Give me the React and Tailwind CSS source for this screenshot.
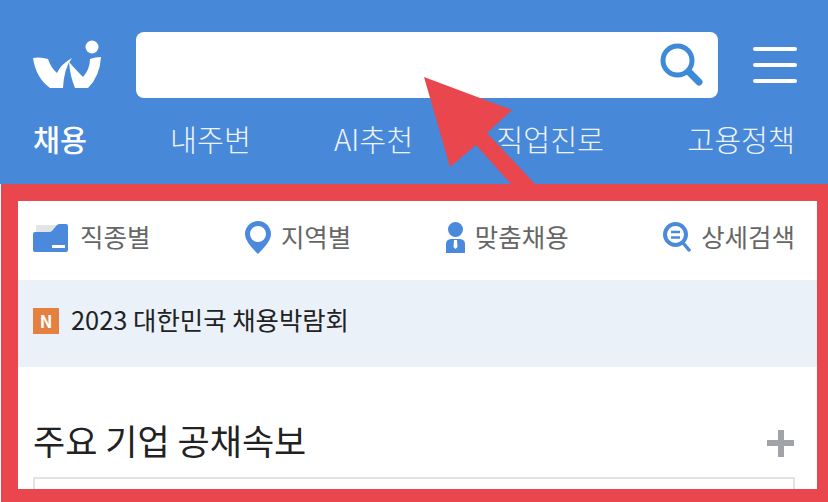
const NAV = ['내주변', 'AI추천', '직업진로', '고용정책']

function Logo() {
  return (
    <svg width="70" height="50" viewBox="0 0 70 50" className="shrink-0 text-white" fill="currentColor">
      <circle cx="59" cy="7" r="6.5" />
      <path d="M0 18 Q7 16.5 15 19 Q18 28 24 33 Q28 24 39 18 Q31 28 30 48 L17 48 Q3 38 0 18Z" />
      <path d="M36 22 Q37 36 42 48 L55 48 Q67 36 68 17 Q62 17 57 19 Q57 29 50 37 Q44 31 36 22Z" />
    </svg>
  )
}

function SearchIcon() {
  return (
    <svg width="44" height="44" viewBox="0 0 44 44" fill="none" stroke="#3f8ad8" strokeLinecap="round">
      <circle cx="17.5" cy="17.5" r="14.5" strokeWidth="5" />
      <path d="M29 29 L39 39" strokeWidth="7" />
    </svg>
  )
}

function FolderIcon() {
  return (
    <svg width="35" height="29" viewBox="0 0 35 29">
      <path d="M3 9 L3 3 Q3 2 4 2 L26 2 L20 9Z" fill="#e4e4e4" />
      <path d="M0 11 Q0 9 2 9 L16 9 Q18 9 19 8 L24 2 Q25 1 27 1 L33 1 Q35 1 35 3 L35 27 Q35 29 33 29 L2 29 Q0 29 0 27Z" fill="#4a89dc" />
      <rect x="19" y="22" width="13" height="3" fill="#fff" />
    </svg>
  )
}

function PinIcon() {
  return (
    <svg width="26" height="33" viewBox="0 0 26 33">
      <path fillRule="evenodd" d="M13 0 C5.8 0 0 5.8 0 13 C0 20 8 28 13 33 C18 28 26 20 26 13 C26 5.8 20.2 0 13 0Z M13 5 A8 8 0 1 1 13 21 A8 8 0 1 1 13 5Z" fill="#4a89dc" />
    </svg>
  )
}

function PersonIcon() {
  return (
    <svg width="19" height="31" viewBox="0 0 19 31">
      <circle cx="9.5" cy="7.5" r="7.5" fill="#4a89dc" />
      <path fillRule="evenodd" d="M0 31 L0 22 Q0 17.5 5 17 L14 17 Q19 17.5 19 22 L19 31Z M8 18 L11 18 L11.5 25 L9.5 27 L7.5 25Z" fill="#4a89dc" />
    </svg>
  )
}

function DetailIcon() {
  return (
    <svg width="28" height="30" viewBox="0 0 28 30" fill="none" stroke="#4a89dc" strokeLinecap="round">
      <circle cx="12.5" cy="12.5" r="10.5" strokeWidth="4" />
      <path d="M21 22 L26 28" strokeWidth="3.5" />
      <path d="M8 10 H17 M8 15.5 H17" strokeWidth="2.5" strokeLinecap="butt" />
    </svg>
  )
}

const TABS = [
  { icon: FolderIcon, label: '직종별', gap: 'gap-3' },
  { icon: PinIcon, label: '지역별', gap: 'gap-[10px]' },
  { icon: PersonIcon, label: '맞춤채용', gap: 'gap-[10px]' },
  { icon: DetailIcon, label: '상세검색', gap: 'gap-[10px]' },
]

export default function App() {
  return (
    <div className="relative w-[828px] h-[502px] overflow-hidden bg-white font-['Noto_Sans_CJK_KR',sans-serif]">
      {/* Header */}
      <header className="h-[184px] bg-[#4888d8] flex flex-col px-[33px]">
        <div className="flex items-center mt-8 h-[66px]">
          <Logo />
          <div className="ml-[33px] w-[582px] h-[66px] bg-white rounded-lg flex items-center justify-end pr-[14px] shrink-0">
            <SearchIcon />
          </div>
          <div className="ml-[35px] w-[44px] flex flex-col gap-3 shrink-0">
            <span className="h-1 bg-white rounded-full" />
            <span className="h-1 bg-white rounded-full" />
            <span className="h-1 bg-white rounded-full" />
          </div>
        </div>
        <nav className="flex justify-between mt-[5px] text-[29.3px] leading-[70px] text-[#edf3fb] font-light">
          <span className="font-medium text-white">채용</span>
          {NAV.map(item => <span key={item}>{item}</span>)}
        </nav>
      </header>

      {/* Framed content */}
      <section className="ml-px h-[318px] border-t-[17px] border-b-[13px] border-l-[17px] border-r-[11px] border-[#ea464d] overflow-hidden">
        <div className="h-[79px] flex items-center justify-between pl-[15px] pr-[22px] pb-[7px]">
          {TABS.map(({ icon: Icon, label, gap }) => (
            <div key={label} className={`flex items-center ${gap} text-[25.5px] text-[#666]`}>
              <Icon />
              <span className="pb-[2px]">{label}</span>
            </div>
          ))}
        </div>
        <div className="h-[87px] bg-[#eaf1f9] flex items-center pl-[15px] pb-[5px] gap-3 text-[#222] text-[25.4px]">
          <span className="w-[26px] h-[26px] bg-[#e58140] text-white text-[17px] font-bold flex items-center justify-center">N</span>
          <span className="pb-[4px]">2023 대한민국 채용박람회</span>
        </div>
        <div className="flex items-center justify-between pl-[15px] pr-[23px] mt-[51px] h-[50px]">
          <h2 className="text-[35px] font-normal text-[#222] pb-[6px]">주요 기업 공채속보</h2>
          <span className="relative w-[27px] h-[27px]">
            <span className="absolute left-[10.5px] top-0 w-[6px] h-[27px] bg-[#a0a3a8]" />
            <span className="absolute left-0 top-[10.5px] w-[27px] h-[6px] bg-[#a0a3a8]" />
          </span>
        </div>
        <div className="ml-[15px] mr-[22px] mt-[9px] h-20 border-2 border-[#e2e2e2]" />
      </section>

      {/* Annotation arrow */}
      <svg className="absolute left-0 top-0 pointer-events-none" width="828" height="502" viewBox="0 0 828 502">
        <path d="M424 77 L512 110 L487 133 L535 184 L511 184 L476 145 L450 167Z" fill="#ea464d" />
      </svg>
    </div>
  )
}
